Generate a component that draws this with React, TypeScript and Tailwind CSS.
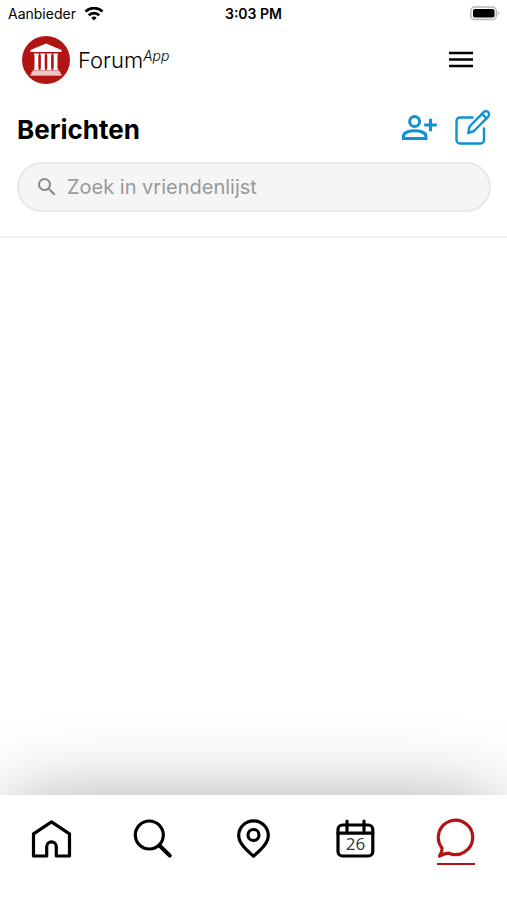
import type { ReactNode } from 'react';

function Logo() {
  return (
    <svg className="w-12 h-12" viewBox="0 0 48 48" fill="none" aria-hidden="true">
      <circle cx="24" cy="24" r="24" fill="#b01513" />
      <path d="M24 7.500 39.500 14v2h-31v-2z" fill="#fff" />
      <path
        d="M12 17.500h4.800v1.200l-.5.600v13l.5.600v1.200H12v-1.200l.5-.6v-13l-.5-.6zM18.400 17.500h4.800v1.200l-.5.600v13l.5.600v1.200h-4.800v-1.200l.5-.6v-13l-.5-.6zM24.800 17.500h4.800v1.200l-.5.600v13l.5.600v1.200h-4.800v-1.200l.5-.6v-13l-.5-.6zM31.200 17.500H36v1.200l-.5.600v13l.5.600v1.200h-4.800v-1.200l.5-.6v-13l-.5-.6z"
        fill="#fff"
      />
      <path d="M10.500 35.200h27M9.500 37h29M8.500 38.800h31" stroke="#fff" strokeWidth="1.300" />
    </svg>
  );
}

function WifiIcon() {
  return (
    <svg className="w-5 h-[14px]" viewBox="0 0 20 14" fill="none" stroke="#000" strokeWidth="2.800" aria-hidden="true">
      <path d="M1.500 4.600a12.200 12.200 0 0 1 17 0" />
      <path d="M4.700 8.200a7.600 7.600 0 0 1 10.600 0" />
      <path d="m10 13.600-2.700-2.900a3.900 3.900 0 0 1 5.400 0z" fill="#000" stroke="none" />
    </svg>
  );
}

function BatteryIcon() {
  return (
    <svg className="w-[30px] h-4" viewBox="0 0 30 16" aria-hidden="true">
      <rect x="1.800" y="1" width="25.500" height="12.600" rx="4" fill="#fff" stroke="#b5b5b5" strokeWidth="1.500" />
      <rect x="4" y="3" width="21.500" height="8.600" rx="1.800" fill="#000" />
      <path d="M28.700 5c1.800.8 1.800 4 0 4.800z" fill="#b5b5b5" />
    </svg>
  );
}

function StatusBar() {
  return (
    <div className="grid grid-cols-3 items-center h-7 px-2 text-sm text-black">
      <div className="flex items-center gap-2">
        <span>Aanbieder</span>
        <WifiIcon />
      </div>
      <div className="text-center font-semibold">3:03 PM</div>
      <div className="flex justify-end">
        <BatteryIcon />
      </div>
    </div>
  );
}

function AddFriendIcon() {
  return (
    <svg className="w-9 h-7" viewBox="0 0 36 28" fill="none" stroke="#0e93d2" strokeWidth="3" aria-hidden="true">
      <circle cx="13.600" cy="8.500" r="5" />
      <path d="M2.500 25.500V23c0-3.700 6.500-5.200 11.200-5.200s11.200 1.500 11.200 5.200v2.500z" />
      <path d="M29.500 5.800v12.400M23.200 12h12.600" />
    </svg>
  );
}

function ComposeIcon() {
  return (
    <svg
      className="w-9 h-9"
      viewBox="0 0 36 36"
      fill="none"
      stroke="#0e93d2"
      strokeWidth="2.400"
      strokeLinecap="round"
      strokeLinejoin="round"
      aria-hidden="true"
    >
      <path d="M17.500 8.500H5A3.500 3.500 0 0 0 1.500 12v19A3.500 3.500 0 0 0 5 34.500h20.500A3.500 3.500 0 0 0 29 31V19.500" />
      <path d="m13.300 24 1.200-6.500L28.700 3.200a3.100 3.100 0 0 1 4.500 4.400L19 22z" />
      <path d="m27 5 4.500 4.500" />
    </svg>
  );
}

type Tab = {
  label: string;
  icon: ReactNode;
  active?: boolean;
};

const tabs: Tab[] = [
  {
    label: 'Home',
    icon: <path d="M2.500 37V14.800L20.500 2.800l18 12V37H25.300v-9.300a4.800 4.800 0 0 0-9.600 0V37z" />,
  },
  {
    label: 'Zoeken',
    icon: (
      <>
        <circle cx="17.300" cy="16" r="14" />
        <path d="m27.500 26.500 10.300 10.200" strokeWidth="4" />
      </>
    ),
  },
  {
    label: 'Kaart',
    icon: (
      <>
        <path d="M20.500 37.200C13.500 31 5.700 24.500 5.700 16.300a14.800 14.400 0 0 1 29.600 0C35.300 24.500 27.500 31 20.500 37.200z" />
        <circle cx="20.500" cy="16" r="5.500" />
      </>
    ),
  },
  {
    label: 'Agenda',
    icon: (
      <>
        <rect x="3" y="6" width="34.800" height="31" rx="4.500" />
        <path d="M3 14.200h34.800M12 2v9.500M29 2v9.500" />
        <text
          x="20.400"
          y="31"
          textAnchor="middle"
          fontSize="17"
          fill="#333"
          stroke="none"
          fontFamily="Open Sans, sans-serif"
        >
          26
        </text>
      </>
    ),
  },
  {
    label: 'Berichten',
    active: true,
    icon: <path d="M6 29a17.200 17.200 0 1 1 6.800 5.200c-3 .2-6 1.300-9.300 2.800 1.700-3 2.800-5.200 2.500-8z" />,
  },
];

function TabBar() {
  return (
    <nav className="relative grid grid-cols-5 pt-6 pb-[35px] bg-white">
      {/* Soft shadow above the bar */}
      <div className="absolute inset-0 -z-10 shadow-[0_-4px_80px_-12px_rgba(0,0,0,0.380)]" />
      <div className="absolute inset-0 bg-white" />
      {tabs.map((tab) => (
        <button
          key={tab.label}
          type="button"
          aria-label={tab.label}
          aria-current={tab.active ? 'page' : undefined}
          className={`relative flex flex-col items-center ${tab.active ? 'text-[#b01513]' : 'text-black'}`}
        >
          <svg
            className="w-10 h-10 overflow-visible"
            viewBox="0 0 40 40"
            fill="none"
            stroke="currentColor"
            strokeWidth="3.200"
            strokeLinecap="round"
            strokeLinejoin="round"
            aria-hidden="true"
          >
            {tab.icon}
          </svg>
          <span className={`w-[38px] h-[2px] mt-1 ${tab.active ? 'bg-[#b01513]' : ''}`} />
        </button>
      ))}
    </nav>
  );
}

export default function App() {
  return (
    <div className="isolate flex flex-col min-h-screen overflow-hidden bg-white font-['Inter',sans-serif]">
      <StatusBar />

      {/* Header */}
      <header className="flex items-center justify-between h-16 pl-[22px] pr-8">
        <div className="flex items-center gap-2">
          <Logo />
          <div className="flex items-start font-light text-black">
            <span className="text-[22px] leading-7">Forum</span>
            <em className="text-sm leading-5">App</em>
          </div>
        </div>
        <button type="button" aria-label="Menu" className="p-[2px]">
          <svg className="w-6 h-6" viewBox="0 0 24 24" stroke="#000" strokeWidth="2.600" aria-hidden="true">
            <path d="M0 5h24M0 11.500h24M0 18h24" />
          </svg>
        </button>
      </header>

      <section className="pl-[17px] pr-4 pb-6 border-b-2 border-[#f1f1f1]">
        <div className="flex items-center justify-between h-[70px]">
          <h1 className="pt-1 text-[26px] font-bold text-black">Berichten</h1>
          <div className="flex items-center gap-[18px]">
            <button type="button" aria-label="Vriend toevoegen">
              <AddFriendIcon />
            </button>
            <button type="button" aria-label="Nieuw bericht">
              <ComposeIcon />
            </button>
          </div>
        </div>

        <label className="flex items-center gap-2 h-[50px] px-4 rounded-full border-2 border-[#e8e8e8] bg-[#f5f5f5]">
          <svg className="w-6 h-6" viewBox="0 0 24 24" fill="#8a8a8a" aria-hidden="true">
            <path d="M15.500 14h-.79l-.28-.27A6.471 6.471 0 0 0 16 9.500 6.500 6.500 0 1 0 9.500 16c1.610 0 3.090-.59 4.230-1.570l.27.28v.79l5 4.990L20.490 19l-4.990-5zm-6 0C7.010 14 5 11.990 5 9.500S7.010 5 9.500 5 14 7.010 14 9.500 11.990 14 9.500 14z" />
          </svg>
          <input
            type="search"
            aria-label="Zoek in vriendenlijst"
            placeholder="Zoek in vriendenlijst"
            className="flex-1 min-w-0 bg-transparent text-xl text-black placeholder:text-[#999] outline-none"
          />
        </label>
      </section>

      <main className="flex-1" />

      <TabBar />
    </div>
  );
}
